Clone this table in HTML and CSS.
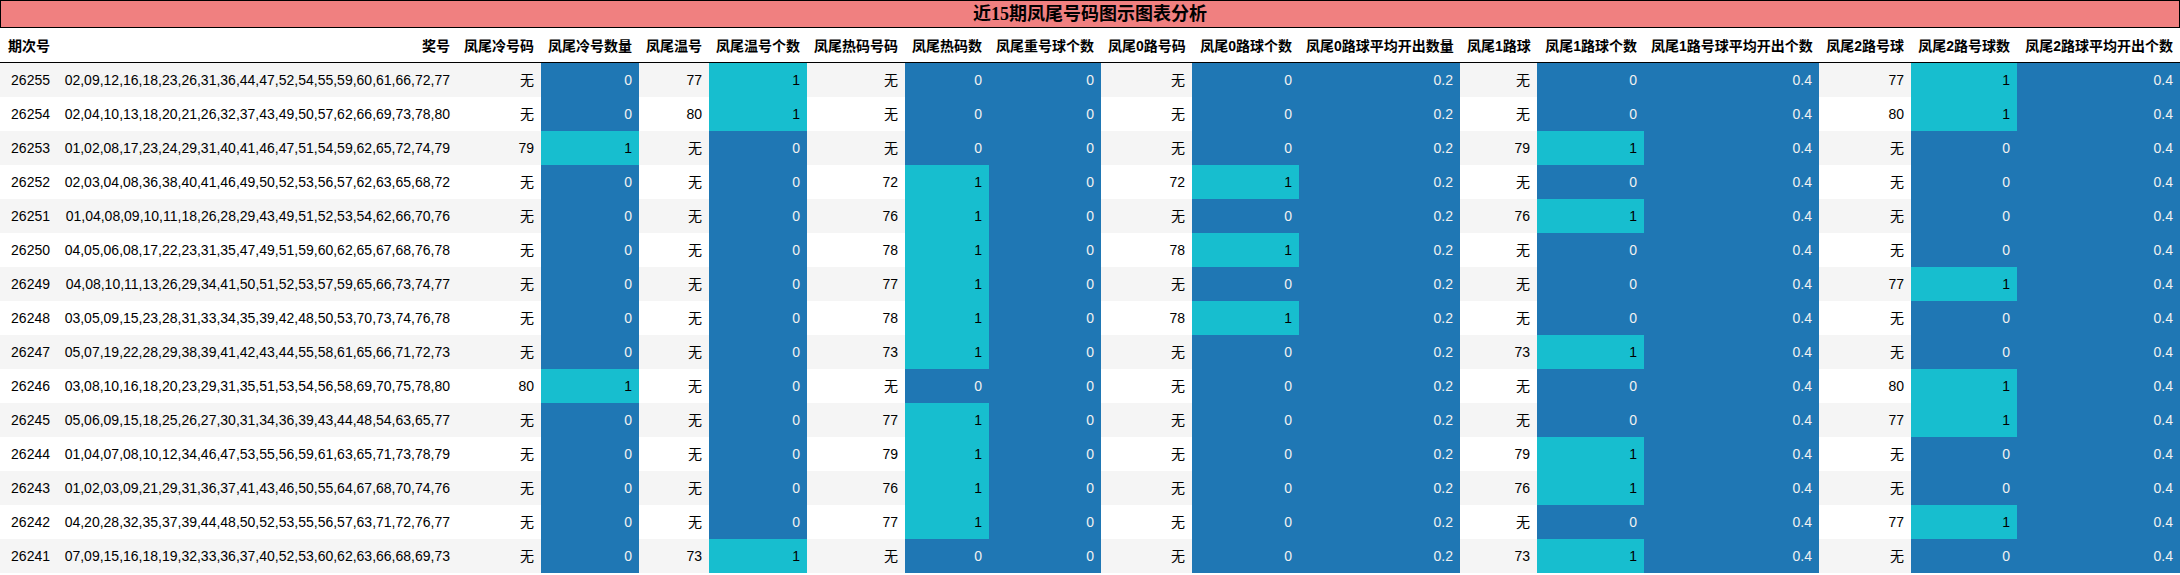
FILE: index.html
```html
<!DOCTYPE html>
<html lang="zh">
<head>
<meta charset="utf-8">
<title>近15期凤尾号码图示图表分析</title>
<link rel="stylesheet" href="styles.css">
</head>
<body>
<table class="report">
<caption class="title">近15期凤尾号码图示图表分析</caption>
<colgroup>
<col class="w-qi"><col class="w-jh"><col class="w-84"><col class="w-98"><col class="w-70"><col class="w-98"><col class="w-98"><col class="w-84"><col class="w-112"><col class="w-91"><col class="w-107"><col class="w-161"><col class="w-77"><col class="w-107"><col class="w-175"><col class="w-92"><col class="w-106"><col class="w-163">
</colgroup>
<thead>
<tr><th>期次号</th><th>奖号</th><th>凤尾冷号码</th><th>凤尾冷号数量</th><th>凤尾温号</th><th>凤尾温号个数</th><th>凤尾热码号码</th><th>凤尾热码数</th><th>凤尾重号球个数</th><th>凤尾0路号码</th><th>凤尾0路球个数</th><th>凤尾0路球平均开出数量</th><th>凤尾1路球</th><th>凤尾1路球个数</th><th>凤尾1路号球平均开出个数</th><th>凤尾2路号球</th><th>凤尾2路号球数</th><th>凤尾2路球平均开出个数</th></tr>
</thead>
<tbody>
<tr><td>26255</td><td>02,09,12,16,18,23,26,31,36,44,47,52,54,55,59,60,61,66,72,77</td><td>无</td><td class="lo">0</td><td>77</td><td class="hi">1</td><td>无</td><td class="lo">0</td><td class="lo">0</td><td>无</td><td class="lo">0</td><td class="lo">0.2</td><td>无</td><td class="lo">0</td><td class="lo">0.4</td><td>77</td><td class="hi">1</td><td class="lo">0.4</td></tr>
<tr><td>26254</td><td>02,04,10,13,18,20,21,26,32,37,43,49,50,57,62,66,69,73,78,80</td><td>无</td><td class="lo">0</td><td>80</td><td class="hi">1</td><td>无</td><td class="lo">0</td><td class="lo">0</td><td>无</td><td class="lo">0</td><td class="lo">0.2</td><td>无</td><td class="lo">0</td><td class="lo">0.4</td><td>80</td><td class="hi">1</td><td class="lo">0.4</td></tr>
<tr><td>26253</td><td>01,02,08,17,23,24,29,31,40,41,46,47,51,54,59,62,65,72,74,79</td><td>79</td><td class="hi">1</td><td>无</td><td class="lo">0</td><td>无</td><td class="lo">0</td><td class="lo">0</td><td>无</td><td class="lo">0</td><td class="lo">0.2</td><td>79</td><td class="hi">1</td><td class="lo">0.4</td><td>无</td><td class="lo">0</td><td class="lo">0.4</td></tr>
<tr><td>26252</td><td>02,03,04,08,36,38,40,41,46,49,50,52,53,56,57,62,63,65,68,72</td><td>无</td><td class="lo">0</td><td>无</td><td class="lo">0</td><td>72</td><td class="hi">1</td><td class="lo">0</td><td>72</td><td class="hi">1</td><td class="lo">0.2</td><td>无</td><td class="lo">0</td><td class="lo">0.4</td><td>无</td><td class="lo">0</td><td class="lo">0.4</td></tr>
<tr><td>26251</td><td>01,04,08,09,10,11,18,26,28,29,43,49,51,52,53,54,62,66,70,76</td><td>无</td><td class="lo">0</td><td>无</td><td class="lo">0</td><td>76</td><td class="hi">1</td><td class="lo">0</td><td>无</td><td class="lo">0</td><td class="lo">0.2</td><td>76</td><td class="hi">1</td><td class="lo">0.4</td><td>无</td><td class="lo">0</td><td class="lo">0.4</td></tr>
<tr><td>26250</td><td>04,05,06,08,17,22,23,31,35,47,49,51,59,60,62,65,67,68,76,78</td><td>无</td><td class="lo">0</td><td>无</td><td class="lo">0</td><td>78</td><td class="hi">1</td><td class="lo">0</td><td>78</td><td class="hi">1</td><td class="lo">0.2</td><td>无</td><td class="lo">0</td><td class="lo">0.4</td><td>无</td><td class="lo">0</td><td class="lo">0.4</td></tr>
<tr><td>26249</td><td>04,08,10,11,13,26,29,34,41,50,51,52,53,57,59,65,66,73,74,77</td><td>无</td><td class="lo">0</td><td>无</td><td class="lo">0</td><td>77</td><td class="hi">1</td><td class="lo">0</td><td>无</td><td class="lo">0</td><td class="lo">0.2</td><td>无</td><td class="lo">0</td><td class="lo">0.4</td><td>77</td><td class="hi">1</td><td class="lo">0.4</td></tr>
<tr><td>26248</td><td>03,05,09,15,23,28,31,33,34,35,39,42,48,50,53,70,73,74,76,78</td><td>无</td><td class="lo">0</td><td>无</td><td class="lo">0</td><td>78</td><td class="hi">1</td><td class="lo">0</td><td>78</td><td class="hi">1</td><td class="lo">0.2</td><td>无</td><td class="lo">0</td><td class="lo">0.4</td><td>无</td><td class="lo">0</td><td class="lo">0.4</td></tr>
<tr><td>26247</td><td>05,07,19,22,28,29,38,39,41,42,43,44,55,58,61,65,66,71,72,73</td><td>无</td><td class="lo">0</td><td>无</td><td class="lo">0</td><td>73</td><td class="hi">1</td><td class="lo">0</td><td>无</td><td class="lo">0</td><td class="lo">0.2</td><td>73</td><td class="hi">1</td><td class="lo">0.4</td><td>无</td><td class="lo">0</td><td class="lo">0.4</td></tr>
<tr><td>26246</td><td>03,08,10,16,18,20,23,29,31,35,51,53,54,56,58,69,70,75,78,80</td><td>80</td><td class="hi">1</td><td>无</td><td class="lo">0</td><td>无</td><td class="lo">0</td><td class="lo">0</td><td>无</td><td class="lo">0</td><td class="lo">0.2</td><td>无</td><td class="lo">0</td><td class="lo">0.4</td><td>80</td><td class="hi">1</td><td class="lo">0.4</td></tr>
<tr><td>26245</td><td>05,06,09,15,18,25,26,27,30,31,34,36,39,43,44,48,54,63,65,77</td><td>无</td><td class="lo">0</td><td>无</td><td class="lo">0</td><td>77</td><td class="hi">1</td><td class="lo">0</td><td>无</td><td class="lo">0</td><td class="lo">0.2</td><td>无</td><td class="lo">0</td><td class="lo">0.4</td><td>77</td><td class="hi">1</td><td class="lo">0.4</td></tr>
<tr><td>26244</td><td>01,04,07,08,10,12,34,46,47,53,55,56,59,61,63,65,71,73,78,79</td><td>无</td><td class="lo">0</td><td>无</td><td class="lo">0</td><td>79</td><td class="hi">1</td><td class="lo">0</td><td>无</td><td class="lo">0</td><td class="lo">0.2</td><td>79</td><td class="hi">1</td><td class="lo">0.4</td><td>无</td><td class="lo">0</td><td class="lo">0.4</td></tr>
<tr><td>26243</td><td>01,02,03,09,21,29,31,36,37,41,43,46,50,55,64,67,68,70,74,76</td><td>无</td><td class="lo">0</td><td>无</td><td class="lo">0</td><td>76</td><td class="hi">1</td><td class="lo">0</td><td>无</td><td class="lo">0</td><td class="lo">0.2</td><td>76</td><td class="hi">1</td><td class="lo">0.4</td><td>无</td><td class="lo">0</td><td class="lo">0.4</td></tr>
<tr><td>26242</td><td>04,20,28,32,35,37,39,44,48,50,52,53,55,56,57,63,71,72,76,77</td><td>无</td><td class="lo">0</td><td>无</td><td class="lo">0</td><td>77</td><td class="hi">1</td><td class="lo">0</td><td>无</td><td class="lo">0</td><td class="lo">0.2</td><td>无</td><td class="lo">0</td><td class="lo">0.4</td><td>77</td><td class="hi">1</td><td class="lo">0.4</td></tr>
<tr><td>26241</td><td>07,09,15,16,18,19,32,33,36,37,40,52,53,60,62,63,66,68,69,73</td><td>无</td><td class="lo">0</td><td>73</td><td class="hi">1</td><td>无</td><td class="lo">0</td><td class="lo">0</td><td>无</td><td class="lo">0</td><td class="lo">0.2</td><td>73</td><td class="hi">1</td><td class="lo">0.4</td><td>无</td><td class="lo">0</td><td class="lo">0.4</td></tr>
</tbody>
</table>
</body>
</html>
```
FILE: styles.css
```css
html, body {
  margin: 0;
  padding: 0;
  background: #ffffff;
}

.report {
  width: 2180px;
  table-layout: fixed;
  border-collapse: collapse;
  border-spacing: 0;
  font-family: "Liberation Sans", "Noto Sans CJK SC", sans-serif;
  font-size: 14px;
  color: #000;
}

.title {
  caption-side: top;
  box-sizing: border-box;
  height: 28px;
  line-height: 26px;
  background: #f08080;
  border: 1px solid #000;
  font-family: "Liberation Serif", "Noto Sans CJK SC", serif;
  font-size: 18px;
  font-weight: bold;
  text-align: center;
  color: #000;
}

.w-qi { width: 57px; }
.w-jh { width: 400px; }
.w-70 { width: 70px; }
.w-77 { width: 77px; }
.w-84 { width: 84px; }
.w-91 { width: 91px; }
.w-92 { width: 92px; }
.w-98 { width: 98px; }
.w-106 { width: 106px; }
.w-107 { width: 107px; }
.w-112 { width: 112px; }
.w-161 { width: 161px; }
.w-163 { width: 163px; }
.w-175 { width: 175px; }

.report th,
.report td {
  padding: 0 7px;
  text-align: right;
  white-space: nowrap;
  overflow: visible;
  vertical-align: middle;
}

.report th {
  height: 34px;
  font-weight: bold;
  background: #fff;
  border-bottom: 1px solid #000;
}

.report td {
  height: 34px;
  line-height: 16px;
}

.report tbody tr:nth-child(odd) {
  background: #f5f5f5;
}

.report tbody tr:nth-child(even) {
  background: #ffffff;
}

.report td.lo {
  background: #1f77b4;
  color: #f1f1f1;
}

.report td.hi {
  background: #17becf;
  color: #000;
}
```
